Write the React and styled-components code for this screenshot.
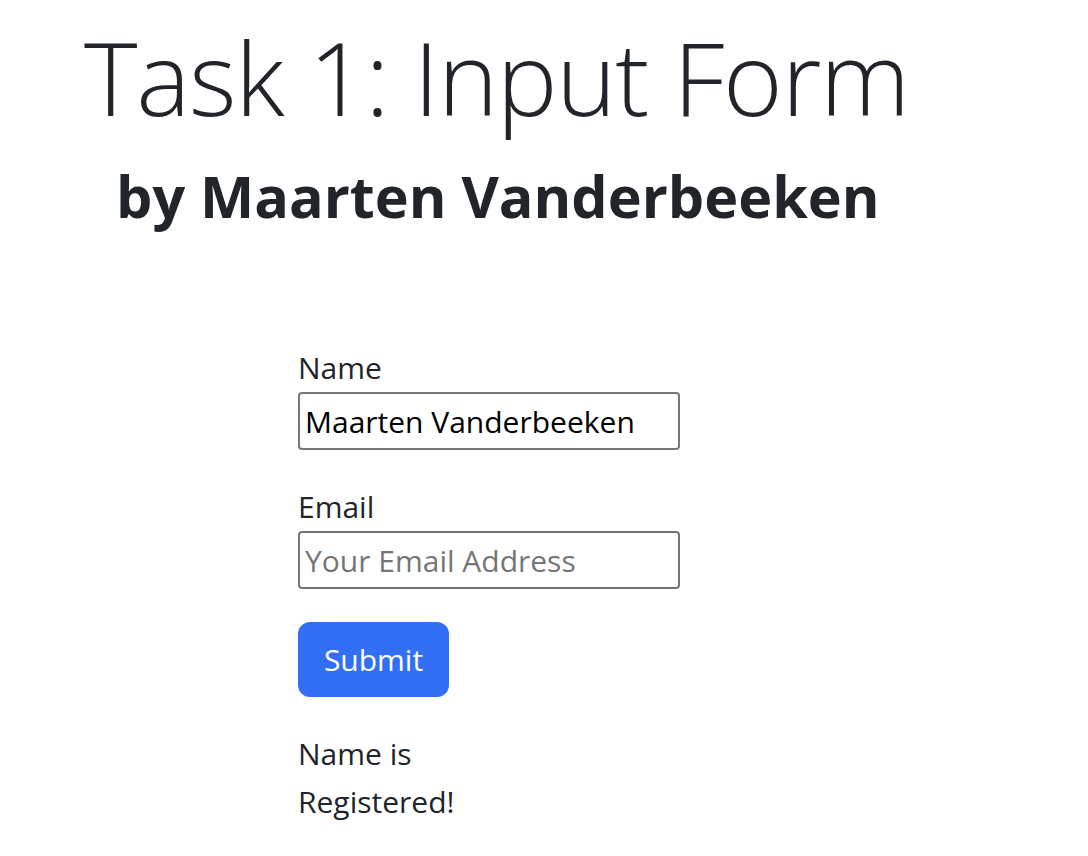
import React, { useState } from 'react'
import styled, { createGlobalStyle } from 'styled-components'

const GlobalStyle = createGlobalStyle`
body{
  margin:0;
  background:#fff;
  color:#212529;
  font-family:"Open Sans","Noto Sans",sans-serif;
}
`
const Page = styled.div`
padding:13px 0 0 84px;
`
const Title = styled.h1`
margin:0;
font-size:102px;
line-height:127px;
font-weight:300;
letter-spacing:-1.3px;
`
const Byline = styled.h2`
margin:20px 0 0 32px;
font-size:57.5px;
line-height:72px;
font-weight:700;
`
const Form = styled.form`
margin:112px 0 0 214px;
font-size:30px;
line-height:48px;
`
const Group = styled.div`
margin-bottom:33px;
`
const Label = styled.label`
display:block;
`
const Input = styled.input`
box-sizing:border-box;
width:382px;
height:58px;
padding:0 5px;
border:2px solid #767676;
border-radius:4px;
font:inherit;
color:#000;
&::placeholder{
  color:#757575;
}
`
const Button = styled.button`
box-sizing:border-box;
width:151px;
height:75px;
border:none;
border-radius:12px;
background:#336ff5;
color:#fff;
font:inherit;
cursor:pointer;
`
const Message = styled.p`
margin:33px 0 0;
width:190px;
`

const App = () => {
  const [name,setName]=useState("Maarten Vanderbeeken");
  const [email,setEmail]=useState("");

  return (
    <Page>
      <GlobalStyle/>
      <Title>Task 1: Input Form</Title>
      <Byline>by Maarten Vanderbeeken</Byline>
      <Form onSubmit={e=>e.preventDefault()}>
        <Group>
          <Label htmlFor="name">Name</Label>
          <Input id="name" value={name} onChange={e=>setName(e.target.value)}/>
        </Group>
        <Group>
          <Label htmlFor="email">Email</Label>
          <Input id="email" type="email" placeholder="Your Email Address" value={email} onChange={e=>setEmail(e.target.value)}/>
        </Group>
        <Button type="submit">Submit</Button>
        <Message>Name is Registered!</Message>
      </Form>
    </Page>
  )
}

export default App
